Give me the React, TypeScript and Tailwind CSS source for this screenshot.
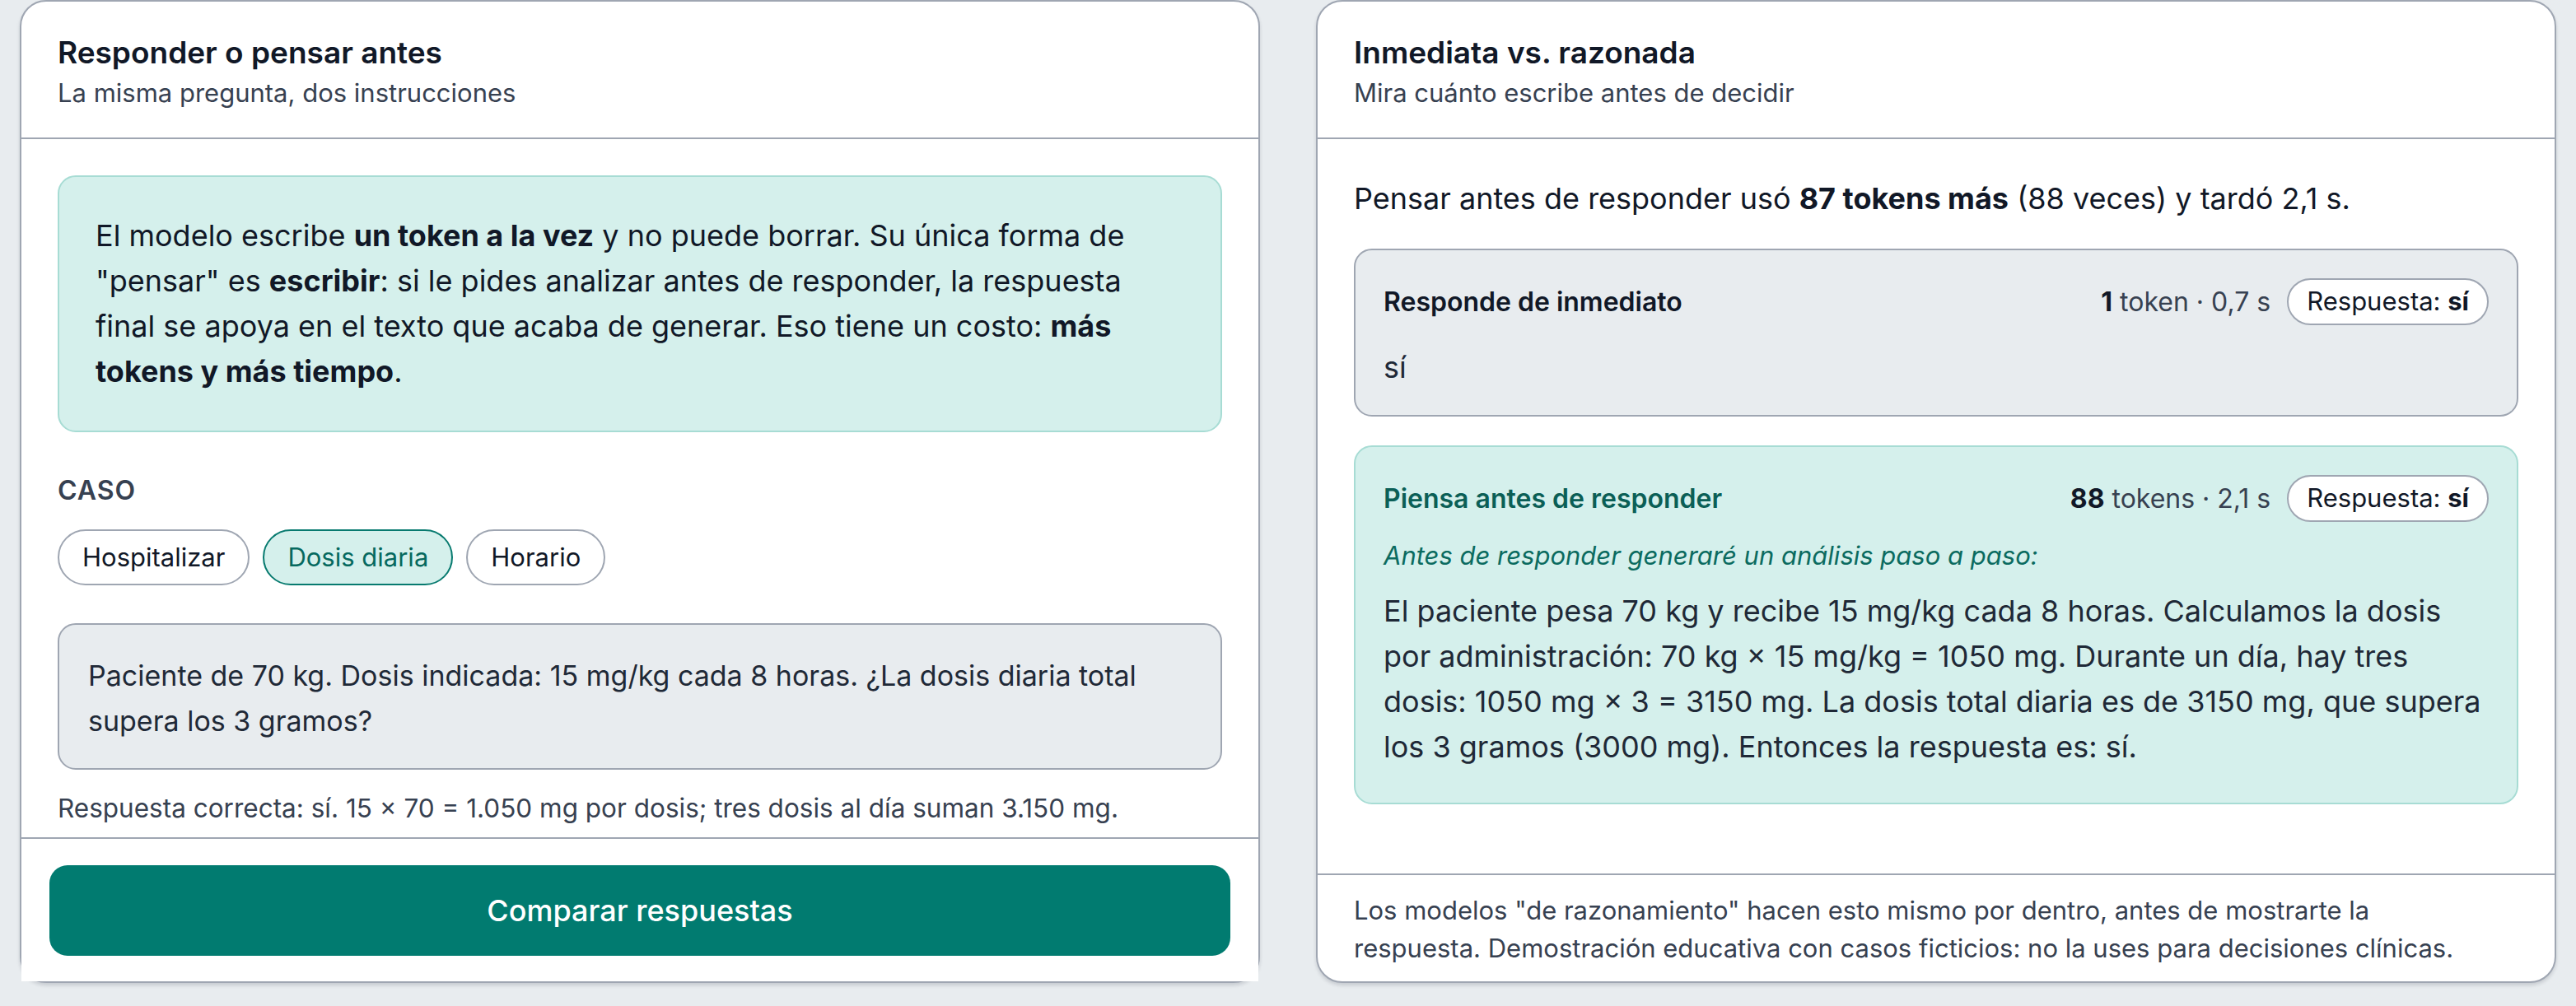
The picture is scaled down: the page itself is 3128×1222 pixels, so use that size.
import { useState } from 'react';

const CASES = ['Hospitalizar', 'Dosis diaria', 'Horario'];

function Pill({ answer }: { answer: string }) {
  return (
    <span className="flex h-[57px] items-center rounded-full border-2 border-[#9fa6b2] bg-white px-[22px] text-[31px] text-[#111827]">
      Respuesta:&nbsp;<b className="font-bold">{answer}</b>
    </span>
  );
}

export default function App() {
  const [active, setActive] = useState('Dosis diaria');

  return (
    <div className="h-[1222px] bg-[#e8ecef] px-[24px] font-['Inter',sans-serif] text-[#111827]">
      <div className="grid grid-cols-2 gap-[68px]">
        {/* Left card: prompt */}
        <section className="flex h-[1194px] flex-col rounded-[32px] border-2 border-[#9fa6b2] bg-white shadow-[0_3px_4px_rgba(15,23,42,0.15)]">
          <header className="border-b-2 border-[#9fa6b2] px-[44px] pt-[38px] pb-[31px]">
            <h2 className="text-[37px] leading-[48px] font-semibold">Responder o pensar antes</h2>
            <p className="mt-[2px] text-[31px] leading-[46px] text-[#374151]">La misma pregunta, dos instrucciones</p>
          </header>

          <div className="flex-1 overflow-hidden px-[44px] pt-[44px]">
            <div className="rounded-[22px] border-2 border-[#a7dcd4] bg-[#d5f0ec] p-[44px] text-[36px] leading-[55px]">
              El modelo escribe <b className="font-bold">un token a la vez</b> y no puede borrar. Su única forma de
              <br />
              "pensar" es <b className="font-bold">escribir</b>: si le pides analizar antes de responder, la respuesta
              <br />
              final se apoya en el texto que acaba de generar. Eso tiene un costo: <b className="font-bold">más</b>
              <br />
              <b className="font-bold">tokens y más tiempo</b>.
            </div>

            <div className="mt-[48px] text-[32px] leading-[45px] font-semibold tracking-[0.03em] text-[#374151]">CASO</div>
            <div className="mt-[25px] flex gap-[16px]">
              {CASES.map((c) => (
                <button
                  key={c}
                  onClick={() => setActive(c)}
                  className={
                    c === active
                      ? 'flex h-[68px] items-center rounded-full border-2 border-[#077a6f] bg-[#d5f0ec] px-[28px] text-[31px] text-[#06695f]'
                      : 'flex h-[68px] items-center rounded-full border-2 border-[#9fa6b2] bg-white px-[28px] text-[31px] text-[#111827]'
                  }
                >
                  {c}
                </button>
              ))}
            </div>

            <div className="mt-[46px] rounded-[22px] border-2 border-[#9fa6b2] bg-[#e8ecef] px-[35px] pt-[34px] pb-[30px] text-[34px] leading-[55px] text-[#1f2937]">
              Paciente de 70 kg. Dosis indicada: 15 mg/kg cada 8 horas. ¿La dosis diaria total supera los 3 gramos?
            </div>

            <p className="mt-[24px] text-[31.5px] leading-[45px] text-[#374151]">
              Respuesta correcta: sí. 15 × 70 = 1.050 mg por dosis; tres dosis al día suman 3.150 mg.
            </p>
          </div>

          <footer className="border-t-2 border-[#9fa6b2] bg-white px-[34px] pt-[32px] pb-[31px]">
            <button className="flex h-[110px] w-full items-center justify-center rounded-[22px] bg-[#017b70] text-[36px] font-medium text-white">
              Comparar respuestas
            </button>
          </footer>
        </section>

        {/* Right card: results */}
        <section className="flex h-[1194px] flex-col rounded-[32px] border-2 border-[#9fa6b2] bg-white shadow-[0_3px_4px_rgba(15,23,42,0.15)]">
          <header className="border-b-2 border-[#9fa6b2] px-[44px] pt-[38px] pb-[31px]">
            <h2 className="text-[37px] leading-[48px] font-semibold">Inmediata vs. razonada</h2>
            <p className="mt-[2px] text-[31px] leading-[46px] text-[#374151]">Mira cuánto escribe antes de decidir</p>
          </header>

          <div className="flex-1 overflow-hidden px-[44px] pt-[45px]">
            <p className="text-[36px] leading-[54px]">
              Pensar antes de responder usó <b className="font-bold">87 tokens más</b> (88 veces) y tardó 2,1 s.
            </p>

            <div className="mt-[34px] rounded-[22px] border-2 border-[#9fa6b2] bg-[#e8ecef] px-[34px] pt-[34px] pb-[30px]">
              <div className="flex h-[57px] items-center justify-between">
                <span className="text-[32px] font-semibold">Responde de inmediato</span>
                <div className="flex items-center gap-[20px]">
                  <span className="text-[32px] text-[#374151]">
                    <b className="font-bold text-[#111827]">1</b> token · 0,7 s
                  </span>
                  <Pill answer="sí" />
                </div>
              </div>
              <p className="mt-[24px] text-[36px] leading-[55px] text-[#1f2937]">sí</p>
            </div>

            <div className="mt-[35px] rounded-[22px] border-2 border-[#a7dcd4] bg-[#d5f0ec] px-[34px] pt-[34px] pb-[40px]">
              <div className="flex h-[57px] items-center justify-between">
                <span className="text-[32px] font-semibold text-[#0b5f56]">Piensa antes de responder</span>
                <div className="flex items-center gap-[20px]">
                  <span className="text-[32px] text-[#374151]">
                    <b className="font-bold text-[#111827]">88</b> tokens · 2,1 s
                  </span>
                  <Pill answer="sí" />
                </div>
              </div>
              <p className="mt-[18px] text-[31px] leading-[45px] text-[#0b6b60] italic">
                Antes de responder generaré un análisis paso a paso:
              </p>
              <p className="mt-[18px] text-[36px] leading-[55px] text-[#1f2937]">
                El paciente pesa 70 kg y recibe 15 mg/kg cada 8 horas. Calculamos la dosis
                <br />
                por administración: 70 kg × 15 mg/kg = 1050 mg. Durante un día, hay tres
                <br />
                dosis: 1050 mg × 3 = 3150 mg. La dosis total diaria es de 3150 mg, que supera
                <br />
                los 3 gramos (3000 mg). Entonces la respuesta es: sí.
              </p>
            </div>
          </div>

          <footer className="border-t-2 border-[#9fa6b2] px-[44px] pt-[20px] pb-[17px] text-[31px] leading-[46px] text-[#374151]">
            Los modelos "de razonamiento" hacen esto mismo por dentro, antes de mostrarte la
            <br />
            respuesta. Demostración educativa con casos ficticios: no la uses para decisiones clínicas.
          </footer>
        </section>
      </div>
    </div>
  );
}
